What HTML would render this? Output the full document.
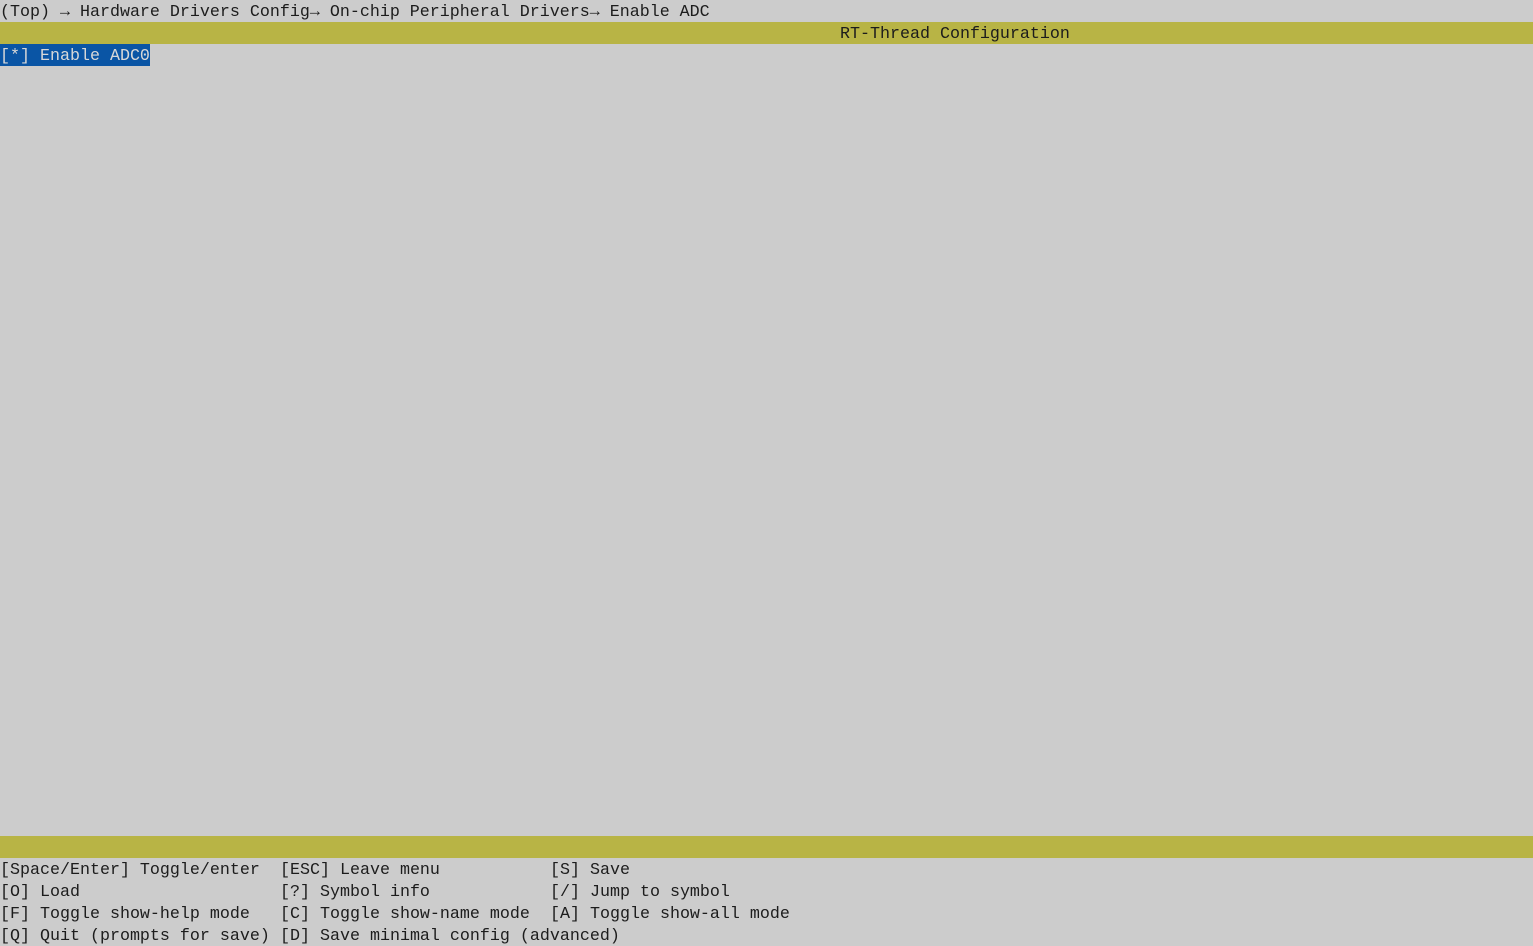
<!DOCTYPE html>
<html><head><meta charset="utf-8"><style>
html,body{margin:0;padding:0;background:#cccccc;width:1533px;height:946px;overflow:hidden}
body{font-family:"Liberation Mono","DejaVu Sans Mono",monospace;font-size:16.67px;color:#1c1c1c;position:relative}
.r{position:absolute;left:0;height:22px;line-height:26px;white-space:pre;width:1533px}
.r span.c{position:absolute}
.bar{background:#b8b445}
.sel{background:#0a55a5;color:#d8d8d8;display:inline-block;height:22px;line-height:26px}
</style></head><body>
<div class="r" style="top:0">(Top) → Hardware Drivers Config→ On-chip Peripheral Drivers→ Enable ADC</div>
<div class="r bar" style="top:22px"><span class="c" style="left:840px">RT-Thread Configuration</span></div>
<div class="r" style="top:44px"><span class="sel">[*] Enable ADC0</span></div>
<div class="r bar" style="top:836px"></div>
<div class="r" style="top:858px"><span class="c" style="left:0">[Space/Enter] Toggle/enter</span><span class="c" style="left:280px">[ESC] Leave menu</span><span class="c" style="left:550px">[S] Save</span></div>
<div class="r" style="top:880px"><span class="c" style="left:0">[O] Load</span><span class="c" style="left:280px">[?] Symbol info</span><span class="c" style="left:550px">[/] Jump to symbol</span></div>
<div class="r" style="top:902px"><span class="c" style="left:0">[F] Toggle show-help mode</span><span class="c" style="left:280px">[C] Toggle show-name mode</span><span class="c" style="left:550px">[A] Toggle show-all mode</span></div>
<div class="r" style="top:924px"><span class="c" style="left:0">[Q] Quit (prompts for save)</span><span class="c" style="left:280px">[D] Save minimal config (advanced)</span></div>
</body></html>
